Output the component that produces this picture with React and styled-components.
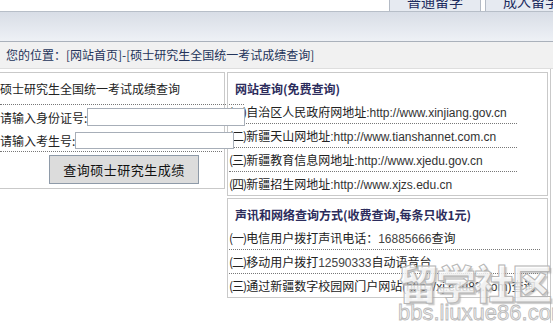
import React from "react"
import styled, { createGlobalStyle } from "styled-components"

const GlobalStyle = createGlobalStyle`
body {
    margin: 0;
    background: #fff;
    font-family: "Noto Sans CJK SC", "Liberation Sans", sans-serif;
    font-size: 12px;
    color: #222;
    overflow: hidden;
}
`

const freeLinks = [
    { no: "(一)", name: "自治区人民政府网地址", url: ":http://www.xinjiang.gov.cn" },
    { no: "(二)", name: "新疆天山网地址", url: ":http://www.tianshannet.com.cn" },
    { no: "(三)", name: "新疆教育信息网地址", url: ":http://www.xjedu.gov.cn" },
    { no: "(四)", name: "新疆招生网地址", url: ":http://www.xjzs.edu.cn" },
]

function App() {
    return (
        <Page>
            <GlobalStyle />
            <TopStrip>
                <Tab><TabText>普通留学</TabText></Tab>
                <Tab><TabText>成人留学</TabText></Tab>
            </TopStrip>
            <NavBar />
            <Crumb>您的位置：[网站首页]-[硕士研究生全国统一考试成绩查询]</Crumb>
            <Main>
                <LeftPanel>
                    <FormTitle>硕士研究生全国统一考试成绩查询</FormTitle>
                    <FormRow>
                        <Label>请输入身份证号:</Label>
                        <Input $w={158} $h={18} />
                    </FormRow>
                    <FormRow $dotted>
                        <Label>请输入考生号:</Label>
                        <Input $w={159} $h={17} />
                    </FormRow>
                    <ButtonRow>
                        <Button>查询硕士研究生成绩</Button>
                    </ButtonRow>
                </LeftPanel>
                <RightCol>
                    <Box $h={124}>
                        <BoxTitle>网站查询(免费查询)</BoxTitle>
                        {freeLinks.map((item, index) => (
                            <LinkRow key={index} $w={288} $last={index === freeLinks.length - 1}>
                                <No>{item.no}</No>{item.name}<Url>{item.url}</Url>
                            </LinkRow>
                        ))}
                    </Box>
                    <Box $h={100} $gap>
                        <BoxTitle>声讯和网络查询方式(收费查询,每条只收1元)</BoxTitle>
                        <LinkRow $w={311}>
                            <No>(一)</No>电信用户拨打声讯电话：<Num>16885666</Num>查询
                        </LinkRow>
                        <LinkRow $w={311}>
                            <No>(二)</No>移动用户拨打<Num>12590333</Num>自动语音台
                        </LinkRow>
                        <LinkRow $w={311} $last>
                            <No>(三)</No>通过新疆数字校园网门户网站<Url>(http://xj.edu83.com)</Url>查询
                        </LinkRow>
                    </Box>
                </RightCol>
            </Main>
            <Watermark>
                <WmBig>留学社区</WmBig>
                <WmSmall>bbs.liuxue86.com</WmSmall>
            </Watermark>
        </Page>
    )
}

const Page = styled.div`
position: relative;
width: 553px;
height: 323px;
overflow: hidden;
`
const TopStrip = styled.div`
display: flex;
justify-content: flex-end;
height: 11px;
border-bottom: 1px solid #b7bec8;
`
const Tab = styled.div`
width: 92px;
height: 11px;
margin-left: 4px;
box-sizing: border-box;
border-left: 1px solid #b3bac5;
border-right: 1px solid #b3bac5;
background: #e6eaf1;
display: flex;
align-items: flex-end;
justify-content: center;
overflow: hidden;
&:last-child{
    margin-right: -24px;
}
`
const TabText = styled.span`
font-size: 14px;
line-height: 14px;
margin-bottom: 3px;
color: #1c2a5e;
`
const NavBar = styled.div`
height: 29px;
background: linear-gradient(#d8dde6, #eef1f6);
border-bottom: 1px solid #aab1bb;
`
const Crumb = styled.div`
height: 26px;
line-height: 26px;
padding-left: 6px;
background: #f1f1f1;
border-bottom: 1px solid #dedede;
color: #24345a;
`
const Main = styled.div`
display: flex;
align-items: flex-start;
height: 255px;
`
const LeftPanel = styled.div`
box-sizing: border-box;
width: 226px;
height: 117px;
margin: 3px 0 0 -1px;
border: 1px solid #c9c9c9;
`
const FormTitle = styled.div`
width: 244px;
height: 31px;
line-height: 31px;
border-bottom: 1px dotted #777;
`
const FormRow = styled.div`
display: flex;
align-items: center;
width: 222px;
height: ${p => p.$dotted ? 22 : 24}px;
border-bottom: ${p => p.$dotted ? "1px dotted #777" : "none"};
`
const Label = styled.span`
white-space: nowrap;
flex-shrink: 0;
`
const Input = styled.input`
box-sizing: border-box;
flex-shrink: 0;
width: ${p => p.$w}px;
height: ${p => p.$h}px;
margin: 0;
padding: 0;
border: 1px solid #a7aeb8;
background: #fff;
position: relative;
z-index: 1;
`
const ButtonRow = styled.div`
padding: 3px 0 0 49px;
`
const Button = styled.button`
width: 150px;
height: 29px;
background: #dcdcdc;
border: 1px solid #8e9aa8;
font-family: "Noto Sans CJK SC", sans-serif;
font-size: 13px;
letter-spacing: 0.5px;
color: #111;
padding: 0;
`
const RightCol = styled.div`
box-sizing: border-box;
width: 324px;
height: 255px;
margin-left: 2px;
padding-top: 3px;
border-right: 1px solid #c9c9c9;
`
const Box = styled.div`
box-sizing: border-box;
width: 321px;
height: ${p => p.$h}px;
margin-top: ${p => p.$gap ? 2 : 0}px;
border: 1px solid #c9c9c9;
padding-left: 1px;
`
const BoxTitle = styled.div`
height: 27px;
line-height: 31px;
padding-left: 6px;
font-weight: bold;
color: #2c2c5c;
white-space: nowrap;
`
const LinkRow = styled.div`
width: ${p => p.$w}px;
height: 23px;
line-height: 23px;
white-space: nowrap;
border-bottom: ${p => p.$last ? "none" : "1px dotted #777"};
`
const No = styled.span`
letter-spacing: -1px;
`
const Url = styled.span`
font-family: "Liberation Sans", sans-serif;
color: #333;
`
const Num = styled.span`
font-family: "Liberation Sans", sans-serif;
color: #444;
`
const Watermark = styled.div`
position: absolute;
left: 398px;
top: 262px;
display: flex;
flex-direction: column;
pointer-events: none;
`
const WmBig = styled.div`
font-size: 40px;
line-height: 40px;
font-weight: 900;
letter-spacing: -2px;
color: rgba(255, 255, 255, 0.75);
-webkit-text-stroke: 1px #b5b5b5;
text-shadow: 2px 2px 1px rgba(150, 150, 150, 0.5);
`
const WmSmall = styled.div`
font-family: "Liberation Sans", sans-serif;
font-size: 22px;
line-height: 22px;
color: #eee;
-webkit-text-stroke: 0.8px #b8b8b8;
`

export default App
